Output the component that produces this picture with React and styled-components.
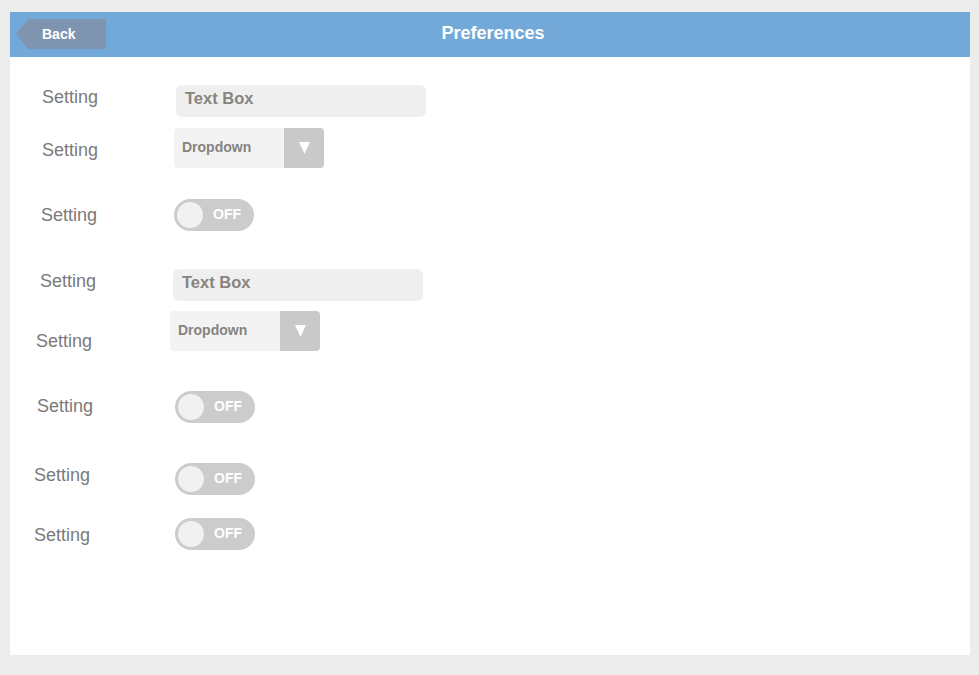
import React from "react";
import styled, { createGlobalStyle } from "styled-components";

const GlobalStyle = createGlobalStyle`
  html, body {
    margin: 0;
    padding: 0;
    background: #ececec;
    font-family: "Liberation Sans", Arial, sans-serif;
  }
`;

const Page = styled.div`
  padding: 12px 0 20px 10px;
`;

const Panel = styled.div`
  width: 960px;
  height: 643px;
  background: #ffffff;
`;

const Header = styled.header`
  position: relative;
  height: 45px;
  background: #73a9d8;
  display: flex;
  align-items: center;
  justify-content: center;
`;

const BackButton = styled.button`
  position: absolute;
  left: 6px;
  top: 7px;
  width: 90px;
  height: 30px;
  border: none;
  padding: 0 0 0 26px;
  text-align: left;
  background: #7f94af;
  color: #ffffff;
  font-family: "Liberation Sans", Arial, sans-serif;
  font-weight: 700;
  font-size: 14px;
  clip-path: polygon(12px 0, 100% 0, 100% 100%, 12px 100%, 0 50%);
`;

const Title = styled.h1`
  margin: 0 0 2px 6px;
  color: #ffffff;
  font-size: 18px;
  font-weight: 700;
`;

const Content = styled.div`
  padding-top: 28px;
`;

const Row = styled.div`
  display: flex;
  align-items: flex-start;
  margin-top: ${(p) => p.$mt}px;
`;

const LabelCell = styled.div`
  width: 160px;
  box-sizing: border-box;
  padding-left: ${(p) => p.$lx}px;
  padding-top: ${(p) => p.$ly}px;
  font-size: 18px;
  line-height: 20px;
  color: #7a7a7a;
`;

const ControlCell = styled.div`
  margin-left: ${(p) => p.$cx}px;
  display: flex;
`;

const TextBox = styled.div`
  width: 250px;
  height: 32px;
  box-sizing: border-box;
  padding-left: 9px;
  border-radius: 6px;
  background: #efefef;
  color: #888480;
  font-weight: 700;
  font-size: 16.5px;
  line-height: 27px;
`;

const Dropdown = styled.div`
  width: 150px;
  height: 40px;
  display: flex;
  border-radius: 4px;
  overflow: hidden;
  background: #f3f3f3;
`;

const DropdownText = styled.span`
  flex: 1;
  padding-left: 8px;
  color: #878380;
  font-weight: 700;
  font-size: 14px;
  line-height: 38px;
`;

const DropdownArrow = styled.span`
  width: 40px;
  background: #c9c9c9;
  display: flex;
  align-items: center;
  justify-content: center;
`;

const Toggle = styled.div`
  position: relative;
  width: 80px;
  height: 32px;
  border-radius: 16px;
  background: #cccccc;
`;

const Knob = styled.span`
  position: absolute;
  left: 3px;
  top: 3px;
  width: 26px;
  height: 26px;
  border-radius: 50%;
  background: #f1f1f1;
`;

const ToggleText = styled.span`
  position: absolute;
  left: 39px;
  top: 0;
  line-height: 30px;
  color: #ffffff;
  font-weight: 700;
  font-size: 14px;
`;

const rows = [
  { type: "text", mt: 0, lx: 32, ly: 2, cx: 6 },
  { type: "dropdown", mt: 11, lx: 32, ly: 12, cx: 4 },
  { type: "toggle", mt: 31, lx: 31, ly: 6, cx: 4 },
  { type: "text", mt: 38, lx: 30, ly: 2, cx: 3 },
  { type: "dropdown", mt: 10, lx: 26, ly: 20, cx: 0 },
  { type: "toggle", mt: 40, lx: 27, ly: 5, cx: 5 },
  { type: "toggle", mt: 40, lx: 24, ly: 2, cx: 5 },
  { type: "toggle", mt: 23, lx: 24, ly: 7, cx: 5 },
];

const Control = ({ type }) => {
  if (type === "text") return <TextBox>Text Box</TextBox>;
  if (type === "dropdown")
    return (
      <Dropdown>
        <DropdownText>Dropdown</DropdownText>
        <DropdownArrow>
          <svg width="11" height="12" viewBox="0 0 11 12">
            <path d="M0 0 H11 L5.5 12 Z" fill="#ffffff" />
          </svg>
        </DropdownArrow>
      </Dropdown>
    );
  return (
    <Toggle>
      <Knob />
      <ToggleText>OFF</ToggleText>
    </Toggle>
  );
};

export default function App() {
  return (
    <Page>
      <GlobalStyle />
      <Panel>
        <Header>
          <BackButton>Back</BackButton>
          <Title>Preferences</Title>
        </Header>
        <Content>
          {rows.map((r, i) => (
            <Row key={i} $mt={r.mt}>
              <LabelCell $lx={r.lx} $ly={r.ly}>
                Setting
              </LabelCell>
              <ControlCell $cx={r.cx}>
                <Control type={r.type} />
              </ControlCell>
            </Row>
          ))}
        </Content>
      </Panel>
    </Page>
  );
}
